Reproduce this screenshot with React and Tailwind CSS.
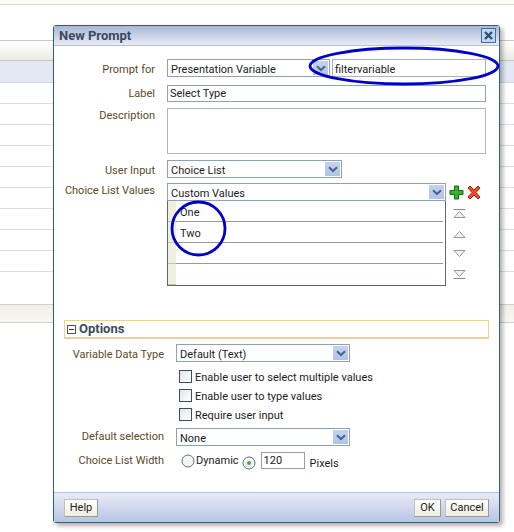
const font = { fontFamily: 'Roboto, Tahoma, sans-serif' };

const Chevron = () => (
  <svg width="10" height="7" viewBox="0 0 10 7">
    <path d="M1 1.2 L5 5 L9 1.2" fill="none" stroke="#4a6488" strokeWidth="2" />
  </svg>
);

const Select = ({ value, className }) => (
  <div className={`flex h-[18px] items-center justify-between border border-[#8da2b5] bg-white pl-[3px] pr-px ${className}`}>
    <span className="pt-[3px]">{value}</span>
    <span className="flex h-[14px] w-[15px] items-center justify-center bg-gradient-to-b from-[#c3d2f0] to-[#b0c4ea]">
      <Chevron />
    </span>
  </div>
);

const Label = ({ children, className = "" }) => (
  <div className={`shrink-0 whitespace-nowrap text-right text-[#5b4a1f] ${className}`}>{children}</div>
);

const Check = ({ text }) => (
  <div className="flex h-[19px] items-center gap-[3px] pl-[3px]">
    <span className="h-[13px] w-[13px] border border-[#34506a] bg-gradient-to-br from-[#e4e4de] to-white"></span>
    <span className="pt-[2px]">{text}</span>
  </div>
);

const Radio = ({ on }) => (
  <svg width="14" height="14" viewBox="0 0 14 14">
    <circle cx="7" cy="7" r="6" fill="#f4f4f0" stroke="#5a7590" />
    {on && <circle cx="7" cy="7" r="2" fill="#3fae49" />}
  </svg>
);

const Btn = ({ children, className = "" }) => (
  <div className={`flex h-[18px] items-center justify-center border border-[#c2c2b4] border-b-[#9a9a8c] border-r-[#9a9a8c] bg-gradient-to-b from-white to-[#eeeee2] text-[#222] ${className}`}>
    {children}
  </div>
);

const Arrow = ({ up, bar }) => (
  <svg width="13" height="12" viewBox="0 0 13 12">
    {bar && <path d={up ? "M0.5 1.5 H12.5" : "M0.5 10.5 H12.5"} stroke="#8a8a8a" />}
    <path
      d={up ? "M1 9.5 L6.5 3.5 L12 9.5 Z" : "M1 2.5 L6.5 8.5 L12 2.5 Z"}
      fill="#f2f2f2"
      stroke="#9a9a9a"
    />
  </svg>
);

const App = () => {
  const rows = [1, 2, 3, 4, 5, 6, 7, 8, 9];

  return (
    <div className="relative h-[532px] w-[514px] overflow-hidden bg-white text-[11px] leading-[14px] text-[#1c1c1c]" style={font}>
      {/* page behind the dialog */}
      <div className="h-[5px] border-b border-[#dcdcd2] bg-[#fbfbf6]"></div>
      <div className="mt-[35px] h-[21px] border-y border-[#c8c8c0] bg-gradient-to-b from-white to-[#ecece4]"></div>
      <div className="h-[22px] border-b border-[#d4d8dc] bg-[#e3e8f3]"></div>
      {rows.map((r) => (
        <div key={r} className="h-[21px] border-b border-[#dcdcdc]"></div>
      ))}
      <div className="mt-[32px] h-[19px] border-y border-[#d0d0c8] bg-gradient-to-b from-[#f0f0e8] to-[#f8f8f2]"></div>

      {/* dialog */}
      <div className="absolute left-[53px] top-[25px] flex h-[498px] w-[447px] flex-col rounded-[3px] border border-[#2f6070] bg-white shadow-[3px_3px_4px_rgba(0,0,0,0.3)]">
        <div className="flex h-[20px] shrink-0 items-center justify-between border-b border-[#b4c2d6] bg-gradient-to-b from-[#a9b6d6] to-[#e8ecf7] pl-[5px] pr-[3px]">
          <span className="text-[13px] font-bold text-[#3b4a5c]">New Prompt</span>
          <span className="flex h-[15px] w-[15px] items-center justify-center border border-[#4a6d96] bg-[#c4d4ee]">
            <svg width="11" height="11" viewBox="0 0 11 11">
              <path d="M2 2 L9 9 M9 2 L2 9" stroke="#27507a" strokeWidth="2.4" />
            </svg>
          </span>
        </div>

        <div className="flex-1 px-[10px]">
          {/* top form */}
          <div className="mt-[13px] flex h-[18px] items-center">
            <Label className="w-[91px] pt-[3px]">Prompt for</Label>
            <Select value="Presentation Variable" className="ml-[12px] w-[163px]" />
            <div className="ml-[2px] flex h-[18px] w-[154px] items-center border border-[#a9b4bc] pl-[2px] pt-[3px]">filtervariable</div>
          </div>
          <div className="mt-[8px] flex h-[17px] items-center">
            <Label className="w-[91px]">Label</Label>
            <div className="ml-[12px] flex h-[17px] w-[319px] items-center border border-[#8da2b5] pl-[2px]">Select Type</div>
          </div>
          <div className="mt-[6px] flex">
            <Label className="w-[91px] pt-px">Description</Label>
            <div className="ml-[12px] h-[46px] w-[319px] border border-[#b0b8bc]"></div>
          </div>
          <div className="mt-[6px] flex h-[18px] items-center">
            <Label className="w-[91px] pt-[3px]">User Input</Label>
            <Select value="Choice List" className="ml-[12px] w-[175px]" />
          </div>

          {/* choice list */}
          <div className="mt-[5px] flex">
            <Label className="w-[91px] pt-px">Choice List Values</Label>
            <div className="ml-[12px] w-[279px]">
              <Select value="Custom Values" className="w-[279px]" />
              <div className="w-[279px] border-x border-b border-[#5c6870]">
                {[
                  ["One", 0],
                  ["Two", 1],
                  ["", 2],
                  ["", 3],
                ].map(([text, i]) => (
                  <div key={i} className="flex h-[21px]">
                    <div className="w-[8px] shrink-0 border-b border-[#c4c4b4] bg-[#efefe0]"></div>
                    <div className={`flex-1 pl-[4px] pt-[5px] ${i < 3 ? "mr-[2px] border-b border-[#999]" : ""}`}>{text}</div>
                  </div>
                ))}
              </div>
            </div>
            <div className="ml-[3px] w-[34px]">
              <div className="flex h-[18px] items-center gap-[2px]">
                <svg width="15" height="15" viewBox="0 0 15 15">
                  <path d="M5.5 1 H9.5 V5.5 H14 V9.5 H9.5 V14 H5.5 V9.5 H1 V5.5 H5.5 Z" fill="#35b52c" stroke="#0d6b12" />
                </svg>
                <svg width="16" height="15" viewBox="0 0 16 15">
                  <path d="M2 3 L4 1 L8 5 L12 1 L14 3 L10 7.5 L14 12 L12 14 L8 10 L4 14 L2 12 L6 7.5 Z" fill="#ef4a2a" stroke="#a8200f" />
                </svg>
              </div>
              <div className="mt-[7px] flex flex-col gap-[8px] pl-[4px]">
                <Arrow up bar />
                <Arrow up />
                <Arrow />
                <Arrow bar />
              </div>
            </div>
          </div>

          {/* options */}
          <div className="mt-[34px] flex h-[19px] items-center gap-[3px] border border-[#ecd193] border-b-2 pl-[2px]">
            <span className="flex h-[9px] w-[9px] items-center justify-center border border-[#555]">
              <span className="h-px w-[5px] bg-[#333]"></span>
            </span>
            <span className="text-[13px] font-bold text-[#3b4a5c]">Options</span>
          </div>

          <div className="mt-[5px] flex h-[18px] items-center">
            <Label className="w-[100px] pt-[3px]">Variable Data Type</Label>
            <Select value="Default (Text)" className="ml-[12px] w-[174px]" />
          </div>
          <div className="ml-[112px] mt-[5px]">
            <Check text="Enable user to select multiple values" />
            <Check text="Enable user to type values" />
            <Check text="Require user input" />
          </div>
          <div className="mt-[4px] flex h-[18px] items-center">
            <Label className="w-[100px]">Default selection</Label>
            <Select value="None" className="ml-[12px] w-[174px]" />
          </div>
          <div className="mt-[6px] flex h-[18px] items-start">
            <Label className="w-[100px] pt-[2px]">Choice List Width</Label>
            <div className="ml-[17px] flex items-center gap-[1px] pt-[2px]"><Radio /><span>Dynamic</span></div>
            <div className="ml-[3px] pt-[4px]"><Radio on /></div>
            <div className="ml-[5px] flex h-[17px] w-[44px] items-center border border-[#8da2b5] pl-[2px] pt-px">120</div>
            <span className="ml-[5px] pt-[5px]">Pixels</span>
          </div>
        </div>

        <div className="flex h-[30px] shrink-0 items-center justify-between border-t border-[#b4c2d6] bg-gradient-to-b from-[#e8ecf7] to-[#b8c4e2] px-[10px]">
          <Btn className="w-[34px]">Help</Btn>
          <div className="flex gap-[4px]">
            <Btn className="w-[27px]">OK</Btn>
            <Btn className="w-[44px]">Cancel</Btn>
          </div>
        </div>

        {/* hand drawn rings */}
        <svg className="pointer-events-none absolute left-[-1px] top-[-1px]" width="460" height="300" viewBox="53 25 460 300">
          <ellipse cx="404" cy="66" rx="94" ry="18" fill="none" stroke="#0000c8" strokeWidth="2.8" />
          <circle cx="198.5" cy="228.5" r="26.5" fill="none" stroke="#0000c8" strokeWidth="2.8" />
        </svg>
      </div>
    </div>
  );
};

export default App;
